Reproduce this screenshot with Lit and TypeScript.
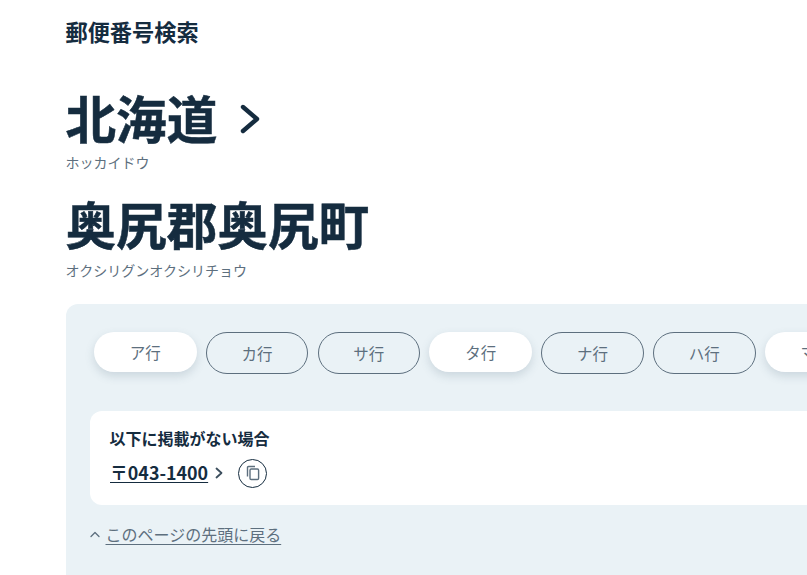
import { LitElement, html, css } from "lit";
import { customElement } from "lit/decorators.js";

const pills: [string, boolean][] = [
  ["ア行", true], ["カ行", false], ["サ行", false], ["タ行", true],
  ["ナ行", false], ["ハ行", false], ["マ行", true], ["ヤ行", false],
];

@customElement("app-root")
export class AppRoot extends LitElement {
  static styles = css`
    :host {
      display: block;
      height: 575px;
      overflow: hidden;
      background: #fff;
      color: #152c3f;
      font-family: "Noto Sans CJK JP", "Noto Sans", sans-serif;
    }
    .page { padding-left: 65.5px; width: 900px; box-sizing: content-box; }
    .site {
      margin: 0; padding-top: 15px; font-size: 22.2px; line-height: 32px; font-weight: 700;
    }
    .heading {
      display: flex; align-items: center; gap: 23px;
      font-size: 50.6px; line-height: 60px; font-weight: 700; margin: 0;
      -webkit-text-stroke: 0.5px #152c3f;
    }
    .pref { margin-top: 40px; }
    .city { margin-top: 21px; }
    .heading svg { display: block; width: 20px; height: 32px; margin-top: 3px; }
    .kana { font-size: 14px; line-height: 20px; color: #5d6f7e; margin-top: 5px; }
    .city + .kana { margin-top: 7px; }
    .panel {
      margin-top: 24px; background: #eaf2f6; border-radius: 12px 0 0 0;
      padding: 28px 0 40px 24.5px; height: 271px; box-sizing: border-box;
    }
    .pills { display: flex; align-items: flex-start; gap: 9.2px; padding-left: 4px; }
    .pill {
      flex: none; width: 102.6px; box-sizing: border-box; height: 42px;
      border: 1px solid #5d6f7e; border-radius: 21px;
      display: flex; align-items: center; justify-content: center;
      font-size: 15.5px; color: #5d6f7e;
    }
    .pill.on {
      height: 40px; border: none; background: #fff; border-radius: 20px; padding-bottom: 1px;
      box-shadow: 0 4px 10px rgba(60, 90, 110, 0.18);
    }
    .card {
      margin-top: 37px; background: #fff; border-radius: 12px;
      padding: 15px 20px 17px 20px; height: 94px; box-sizing: border-box;
    }
    .card-title { font-size: 16px; line-height: 24px; font-weight: 700; margin-left: -0.5px; }
    .zip-row { display: flex; align-items: center; margin-top: 8px; height: 30px; }
    .zip {
      font-size: 17.85px; line-height: 30px; font-weight: 700; color: #152c3f;
      text-decoration: underline; text-underline-offset: 2px; padding-bottom: 2px;
    }
    .zip-arrow { width: 8px; height: 12px; margin-left: 7px; display: block; }
    .copy {
      margin-left: 15px; width: 29px; height: 29px; border: 1px solid #152c3f;
      border-radius: 50%; box-sizing: border-box;
      display: flex; align-items: center; justify-content: center;
    }
    .copy svg { width: 16px; height: 16px; display: block; }
    .top { display: flex; align-items: center; margin-top: 17px; color: #5d6f7e; font-size: 16px; line-height: 24px; }
    .top svg { width: 10px; height: 7px; margin-right: 5.5px; display: block; }
    .top span { text-decoration: underline; text-underline-offset: 3px; }
  `;

  render() {
    return html`
      <div class="page">
        <div class="site">郵便番号検索</div>
        <div class="heading pref">北海道
          <svg viewBox="0 0 20 32" fill="none" stroke="#152c3f" stroke-width="4.4" stroke-linecap="round" stroke-linejoin="round">
            <path d="M3 4 L17 16 L3 28"></path>
          </svg>
        </div>
        <div class="kana">ホッカイドウ</div>
        <div class="heading city">奥尻郡奥尻町</div>
        <div class="kana">オクシリグンオクシリチョウ</div>
        <div class="panel">
          <div class="pills">
            ${pills.map(([t, on]) => html`<div class="pill ${on ? "on" : ""}">${t}</div>`)}
          </div>
          <div class="card">
            <div class="card-title">以下に掲載がない場合</div>
            <div class="zip-row">
              <span class="zip">〒043-1400</span>
              <svg class="zip-arrow" viewBox="0 0 8 12" fill="none" stroke="#3c4f5e" stroke-width="1.8" stroke-linecap="round" stroke-linejoin="round">
                <path d="M1.5 1.5 L6.5 6 L1.5 10.5"></path>
              </svg>
              <div class="copy">
                <svg viewBox="0 0 16 16" fill="none" stroke="#5d6f7e" stroke-width="1.4">
                  <path d="M2.5 11.5 V2.6 Q2.5 1.5 3.6 1.5 H10"></path>
                  <rect x="5" y="4" width="8.6" height="10.5" rx="1.2"></rect>
                </svg>
              </div>
            </div>
          </div>
          <div class="top">
            <svg viewBox="0 0 10 7" fill="none" stroke="#5d6f7e" stroke-width="1.3" stroke-linecap="round" stroke-linejoin="round">
              <path d="M1 5.5 L5 1.5 L9 5.5"></path>
            </svg>
            <span>このページの先頭に戻る</span>
          </div>
        </div>
      </div>
    `;
  }
}
